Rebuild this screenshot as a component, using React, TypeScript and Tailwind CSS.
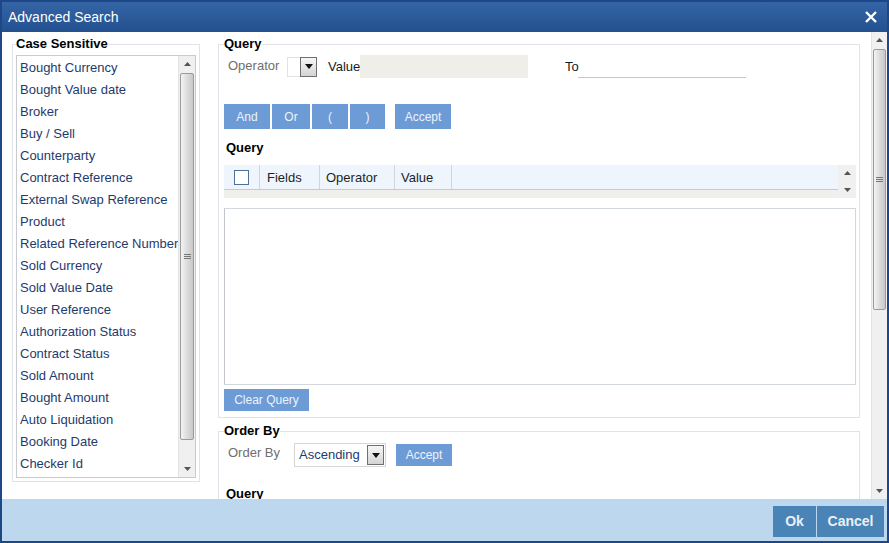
import React from "react";

const FIELDS = [
  "Bought Currency",
  "Bought Value date",
  "Broker",
  "Buy / Sell",
  "Counterparty",
  "Contract Reference",
  "External Swap Reference",
  "Product",
  "Related Reference Number",
  "Sold Currency",
  "Sold Value Date",
  "User Reference",
  "Authorization Status",
  "Contract Status",
  "Sold Amount",
  "Bought Amount",
  "Auto Liquidation",
  "Booking Date",
  "Checker Id",
];

function Arrow({ up }: { up?: boolean }) {
  return (
    <svg width="7" height="4" viewBox="0 0 7 4">
      {up ? <path d="M0 4 L3.5 0 L7 4 Z" fill="#555" /> : <path d="M0 0 L7 0 L3.5 4 Z" fill="#555" />}
    </svg>
  );
}

function Grip() {
  return (
    <svg width="7" height="7" viewBox="0 0 7 7">
      <path d="M0 1.5 H7 M0 3.5 H7 M0 5.5 H7" stroke="#777" strokeWidth="1" />
    </svg>
  );
}

function ScrollBar({ thumbH, arrowH = 16 }: { thumbH: number; arrowH?: number }) {
  return (
    <div className="flex flex-col h-full w-full bg-[#f0f0f0] border-l border-[#e3e3e3]">
      <div className="flex items-center justify-center shrink-0" style={{ height: arrowH }}>
        <Arrow up />
      </div>
      <div
        className="mx-[1px] mt-[1px] shrink-0 rounded-[2px] border border-[#9a9a9a] bg-gradient-to-r from-[#f4f4f4] via-[#dcdcdc] to-[#c8c8c8] flex items-center justify-center"
        style={{ height: thumbH }}
      >
        <Grip />
      </div>
      <div className="flex-1" />
      <div className="flex items-center justify-center shrink-0" style={{ height: arrowH }}>
        <Arrow />
      </div>
    </div>
  );
}

function BlueBtn({ children, w }: { children: React.ReactNode; w: string }) {
  return (
    <button className={`${w} h-full bg-[#6c9bd6] text-[#eef3fb] text-[12px] flex items-center justify-center`}>
      {children}
    </button>
  );
}

function DropBtn() {
  return (
    <div className="w-[17px] h-full border border-[#6f6f6f] bg-gradient-to-b from-[#f6f6f6] to-[#d4d4d4] flex items-center justify-center">
      <svg width="8" height="5" viewBox="0 0 8 5">
        <path d="M0 0 L8 0 L4 5 Z" fill="#111" />
      </svg>
    </div>
  );
}

export default function App() {
  return (
    <div
      className="w-[889px] h-[543px] border-2 border-[#1e4785] flex flex-col overflow-hidden"
      style={{ fontFamily: '"Liberation Sans", Arial, sans-serif' }}
    >
      {/* title bar */}
      <div className="h-[30px] shrink-0 bg-gradient-to-b from-[#3565a6] to-[#23508f] flex items-center justify-between pl-[6px] pr-[10px]">
        <span className="text-white text-[14px]">Advanced Search</span>
        <svg width="12" height="12" viewBox="0 0 12 12">
          <path d="M1 1 L11 11 M11 1 L1 11" stroke="#fff" strokeWidth="2.4" />
        </svg>
      </div>

      {/* body */}
      <div className="h-[467px] shrink-0 bg-white flex overflow-hidden">
        {/* left column */}
        <div className="pl-[10px] pt-[4px] shrink-0">
          <fieldset className="w-[188px] min-w-0 border border-[#dfe4ea] px-[3px] pb-[3px]">
            <legend className="text-[13px] leading-[16px] font-bold text-black">Case Sensitive</legend>
            <div className="mt-[3px] h-[423px] border border-[#c7ccd3] flex">
              <div className="flex-1 min-w-0 pt-[1px] pl-[3px] overflow-hidden">
                {FIELDS.map((f) => (
                  <div key={f} className="h-[22px] flex items-center text-[13px] text-[#1d3b6e] whitespace-nowrap">
                    {f}
                  </div>
                ))}
              </div>
              <div className="w-[17px] shrink-0">
                <ScrollBar thumbH={367} />
              </div>
            </div>
          </fieldset>
        </div>

        {/* right column */}
        <div className="ml-[18px] w-[642px] shrink-0 pt-[4px] flex flex-col">
          <fieldset className="min-w-0 border border-[#dfe4ea] pl-[5px] pr-[3px] pb-[6px]">
            <legend className="text-[13px] leading-[16px] font-bold text-black">Query</legend>
            <div className="mt-[3px] h-[23px] flex items-center text-[13px]">
              <span className="ml-[4px] w-[59px] text-[#6e6e6e] -mt-[2px]">Operator</span>
              <div className="w-[31px] h-[20px] flex">
                <div className="w-[13px] h-full border-y border-l border-[#e2e2e2] bg-white" />
                <DropBtn />
              </div>
              <span className="ml-[10px] w-[32px] text-[#1a1a1a]">Value</span>
              <div className="w-[168px] h-[23px] bg-[#f0eee9]" />
              <span className="ml-[37px] w-[13px] text-[#1a1a1a]">To</span>
              <div className="w-[168px] h-[23px] border-b border-[#c8c8c8]" />
            </div>

            <div className="mt-[26px] h-[25px] flex">
              <BlueBtn w="w-[46px]">And</BlueBtn>
              <div className="w-[2px]" />
              <BlueBtn w="w-[38px]">Or</BlueBtn>
              <div className="w-[2px]" />
              <BlueBtn w="w-[36px]">(</BlueBtn>
              <div className="w-[2px]" />
              <BlueBtn w="w-[35px]">)</BlueBtn>
              <div className="w-[10px]" />
              <BlueBtn w="w-[56px]">Accept</BlueBtn>
            </div>

            <div className="mt-[11px] ml-[2px] text-[13px] leading-[16px] font-bold text-black">Query</div>

            <div className="mt-[9px] flex h-[33px]">
              <div className="flex-1 flex flex-col">
                <div className="h-[25px] bg-[#eef5fd] border-b border-[#c9c9c9] flex text-[13px] text-[#1f1f1f]">
                  <div className="w-[36px] flex items-center justify-center border-r border-[#d4d4d4]">
                    <div className="w-[15px] h-[15px] border border-[#4d6f98] bg-white" />
                  </div>
                  <div className="w-[60px] pl-[7px] pt-[2px] flex items-center border-r border-[#d4d4d4]">Fields</div>
                  <div className="w-[75px] pl-[6px] pt-[2px] flex items-center border-r border-[#d4d4d4]">Operator</div>
                  <div className="w-[57px] pl-[6px] pt-[2px] flex items-center border-r border-[#d4d4d4]">Value</div>
                </div>
                <div className="flex-1 bg-[#f0efeb]" />
              </div>
              <div className="w-[18px] bg-[#f0f0f0] flex flex-col items-center justify-between py-[6px]">
                <Arrow up />
                <Arrow />
              </div>
            </div>

            <div className="mt-[10px] h-[177px] border border-[#d3d8df] border-l-[#c2c6cc]" />

            <button className="mt-[4px] w-[85px] h-[22px] bg-[#6c9bd6] text-[#eef3fb] text-[12px] flex items-center justify-center">
              Clear Query
            </button>
          </fieldset>

          <fieldset className="mt-[5px] min-w-0 border border-[#dfe4ea] pl-[5px] pr-[3px] h-[80px]">
            <legend className="text-[13px] leading-[16px] font-bold text-black">Order By</legend>
            <div className="mt-[4px] h-[24px] flex items-center text-[13px]">
              <span className="ml-[4px] w-[66px] text-[#6e6e6e] -mt-[5px]">Order By</span>
              <div className="w-[92px] h-[24px] border border-[#d6d6d6] flex items-center pl-[4px] pr-[1px]">
                <span className="flex-1 text-[#1d3b6e] text-[13px]">Ascending</span>
                <div className="h-[20px]">
                  <DropBtn />
                </div>
              </div>
              <button className="ml-[10px] w-[56px] h-[22px] bg-[#6c9bd6] text-[#eef3fb] text-[12px] flex items-center justify-center">
                Accept
              </button>
            </div>
            <div className="mt-[19px] ml-[2px] text-[13px] leading-[16px] font-bold text-black">Query</div>
          </fieldset>
        </div>

        {/* main scrollbar */}
        <div className="ml-[11px] w-[16px] shrink-0">
          <ScrollBar thumbH={261} />
        </div>
      </div>

      {/* footer */}
      <div className="flex-1 bg-[#bdd8ee] flex justify-end items-start pt-[7px] pr-[3px]">
        <button className="w-[43px] h-[31px] bg-[#4a83b6] text-[#e9f0f8] text-[14px] font-bold">Ok</button>
        <button className="ml-[1px] w-[67px] h-[31px] bg-[#4a83b6] text-[#e9f0f8] text-[14px] font-bold">Cancel</button>
      </div>
    </div>
  );
}
